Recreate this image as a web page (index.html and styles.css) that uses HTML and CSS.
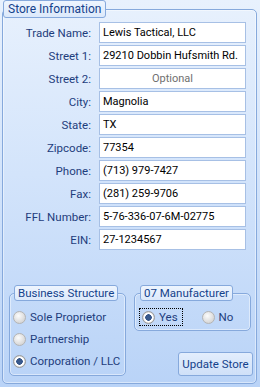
FILE: index.html
```html
<!DOCTYPE html>
<html lang="en">
<head>
  <meta charset="UTF-8">
  <title>Store Information</title>
  <link rel="stylesheet" href="styles.css">
</head>
<body>

  <fieldset class="group store">
    <legend>Store Information</legend>

    <div class="row"><label>Trade Name:</label><input type="text" value="Lewis Tactical, LLC"></div>
    <div class="row"><label>Street 1:</label><input type="text" value="29210 Dobbin Hufsmith Rd."></div>
    <div class="row"><label>Street 2:</label><input type="text" class="optional" placeholder="Optional"></div>
    <div class="row"><label>City:</label><input type="text" value="Magnolia"></div>
    <div class="row"><label>State:</label><input type="text" value="TX"></div>
    <div class="row"><label>Zipcode:</label><input type="text" value="77354"></div>
    <div class="row"><label>Phone:</label><input type="text" value="(713) 979-7427"></div>
    <div class="row"><label>Fax:</label><input type="text" value="(281) 259-9706"></div>
    <div class="row"><label>FFL Number:</label><input type="text" value="5-76-336-07-6M-02775"></div>
    <div class="row"><label>EIN:</label><input type="text" value="27-1234567"></div>

    <div class="bottom">
      <!-- Business Structure -->
      <fieldset class="group business">
        <legend>Business Structure</legend>
        <div class="radio"><span class="dot"></span>Sole Proprietor</div>
        <div class="radio"><span class="dot"></span>Partnership</div>
        <div class="radio"><span class="dot checked"></span>Corporation / LLC</div>
      </fieldset>

      <div class="side">
        <!-- 07 Manufacturer -->
        <fieldset class="group maker">
          <legend>07 Manufacturer</legend>
          <div class="choices">
            <div class="radio focus"><span class="dot checked"></span>Yes</div>
            <div class="radio"><span class="dot"></span>No</div>
          </div>
        </fieldset>
        <button class="update">Update Store</button>
      </div>
    </div>
  </fieldset>

</body>
</html>
```

FILE: styles.css
```css
html {
  height: 100%;
}

body {
  margin: 0;
  height: 100%;
  font-family: Roboto, "Liberation Sans", sans-serif;
  font-size: 11.5px;
  background: linear-gradient(#e8f1fd, #d3e4fb 45%, #b9d3f7);
}

.group {
  border: 1px solid #86a9dc;
  border-radius: 5px;
  box-shadow: inset 0 0 0 1px rgba(255,255,255,0.45);
  padding: 0;
  min-width: 0;
}

.group legend {
  color: #15428b;
  background: linear-gradient(#eef5fe, #dce9fb);
  border: 1px solid #86a9dc;
  border-radius: 3px;
  padding: 0 3px;
  line-height: 14px;
  white-space: nowrap;
}

.store {
  margin: 0 3px 0 2px;
  padding: 4px 0 6px 0;
  height: 384px;
  box-sizing: border-box;
}

.store > legend {
  margin-left: 0;
  font-size: 12px;
  line-height: 16px;
  padding: 0 4px;
}

.row {
  display: flex;
  align-items: center;
  height: 21px;
  margin-bottom: 2px;
}

.row label {
  width: 88px;
  text-align: right;
  color: #1e3d7c;
  margin-right: 8px;
}

.row input {
  width: 147px;
  height: 21px;
  box-sizing: border-box;
  border: 1px solid #a7c0e5;
  background: #fff;
  padding: 0 3px;
  font-family: inherit;
  font-size: 11px;
  color: #000;
  outline: none;
}

.row input.optional {
  text-align: center;
}

.row input::placeholder {
  color: #707070;
}

.bottom {
  display: flex;
  margin-top: 35px;
  padding-left: 4px;
}

.business {
  width: 117px;
  height: 91px;
  box-sizing: border-box;
  padding: 5px 0 0 3px;
}

.business legend {
  margin-left: 1px;
}

.side {
  display: flex;
  flex-direction: column;
  align-items: flex-end;
  margin-left: 8px;
  width: 117px;
}

.maker {
  width: 117px;
  height: 46px;
  box-sizing: border-box;
  padding: 5px 0 0 5px;
}

.choices {
  display: flex;
}

.radio {
  display: flex;
  align-items: center;
  height: 22px;
  color: #1e3d7c;
  font-size: 11.5px;
  white-space: nowrap;
}

.radio .dot {
  flex: none;
  width: 11px;
  height: 11px;
  border-radius: 50%;
  border: 1px solid #b4b4b4;
  background: radial-gradient(circle at 40% 35%, #fcfcfc, #d8d8d8 70%);
  margin-right: 4px;
}

.radio .dot.checked {
  background: radial-gradient(circle, #3d5d8e 0, #34558a 3px, #fff 3.5px, #fff 4.5px, #d0d0d0 5.5px);
  border-color: #9c9c9c;
}

.maker .radio {
  height: 16px;
  margin-top: 3px;
}

.radio.focus {
  outline: 1px dotted #000;
  outline-offset: 0;
  padding: 0 4px 0 2px;
  margin-right: 20px;
}

.update {
  margin-top: 21px;
  width: 75px;
  height: 24px;
  border: 1px solid #86a9dc;
  border-radius: 3px;
  background: linear-gradient(#e3eefd, #cfe0f8);
  color: #15428b;
  font-family: inherit;
  font-size: 11.5px;
  padding: 0;
}
```
